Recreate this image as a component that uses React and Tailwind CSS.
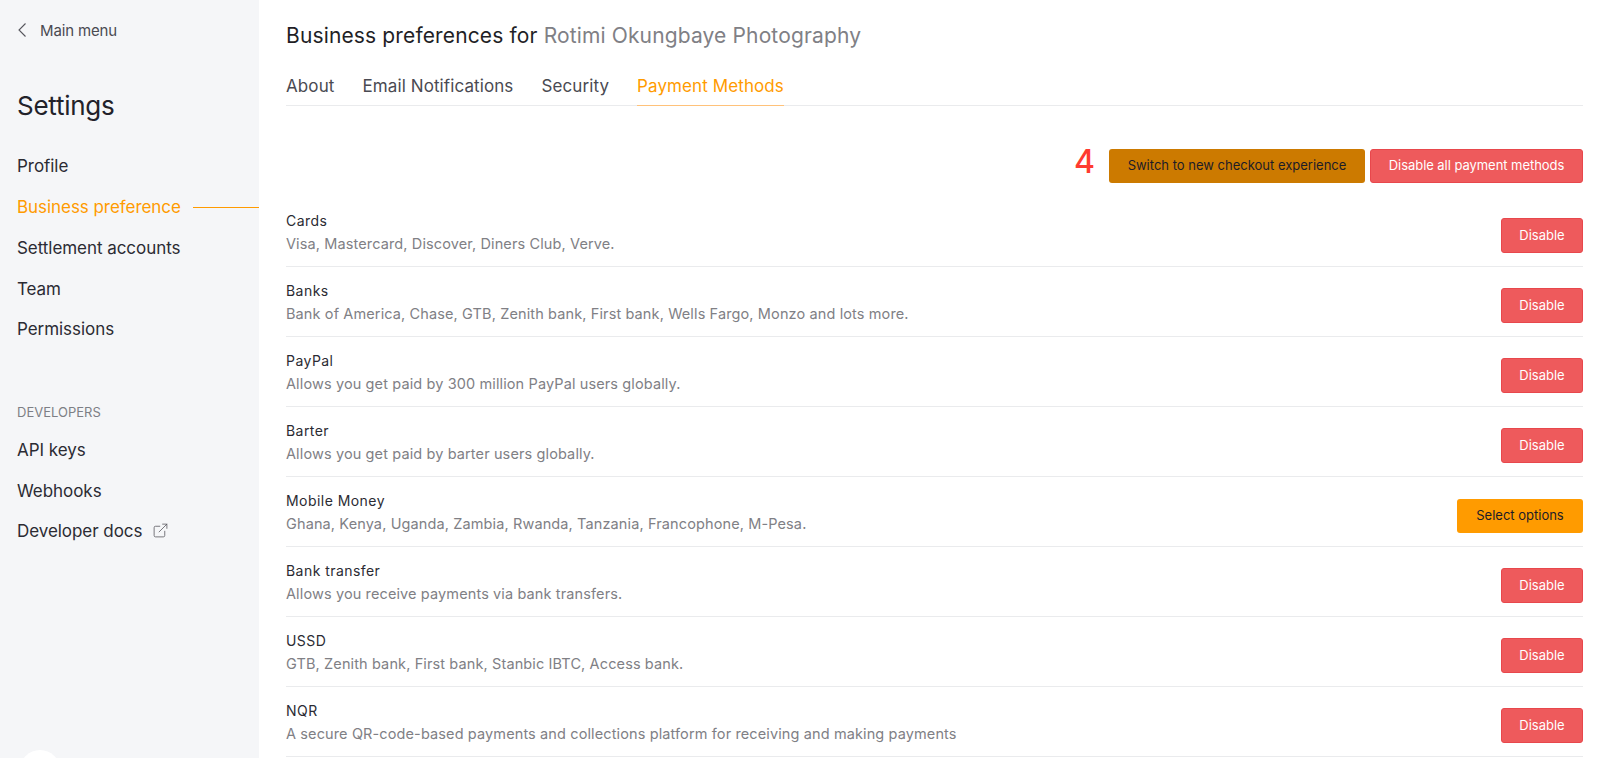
import React from "react";
import { ExternalLink } from "lucide-react";

const methods = [
  { name: "Cards", desc: "Visa, Mastercard, Discover, Diners Club, Verve." },
  { name: "Banks", desc: "Bank of America, Chase, GTB, Zenith bank, First bank, Wells Fargo, Monzo and lots more." },
  { name: "PayPal", desc: "Allows you get paid by 300 million PayPal users globally." },
  { name: "Barter", desc: "Allows you get paid by barter users globally." },
  { name: "Mobile Money", desc: "Ghana, Kenya, Uganda, Zambia, Rwanda, Tanzania, Francophone, M-Pesa.", select: true },
  { name: "Bank transfer", desc: "Allows you receive payments via bank transfers." },
  { name: "USSD", desc: "GTB, Zenith bank, First bank, Stanbic IBTC, Access bank." },
  { name: "NQR", desc: "A secure QR-code-based payments and collections platform for receiving and making payments" },
];

function NavItem({ children, active, height = "h-[41px]" }) {
  return (
    <div className={`flex items-center ${height} text-[17px] tracking-[-0.05px] ${active ? "text-[#ff9b00]" : "text-[#2b2b33]"}`}>
      <span>{children}</span>
      {active && <div className="ml-3 flex-1 h-px bg-[#ff9b00]" />}
    </div>
  );
}

export default function App() {
  return (
    <div className="flex h-[758px] overflow-hidden bg-white font-['Inter',sans-serif]">
      <aside className="relative w-[259px] shrink-0 bg-[#f5f6f8] pl-[17px]">
        <div className="flex items-center h-6 mt-[19px] text-[15px] tracking-[-0.15px] text-[#4a4a52]">
          <svg width="8" height="14" viewBox="0 0 8 14" fill="none" stroke="#55555c" strokeWidth="1.1" className="ml-px mr-[14px] mb-[2px]">
            <path d="M7.5 0.5 L1 7 L7.5 13.5" />
          </svg>
          Main menu
        </div>
        <h2 className="mt-[45px] text-[26px] leading-9 tracking-[-0.26px] text-[#22222a]">Settings</h2>
        <nav className="mt-[22px]">
          <NavItem>Profile</NavItem>
          <NavItem active>Business preference</NavItem>
          <NavItem>Settlement accounts</NavItem>
          <NavItem>Team</NavItem>
          <NavItem height="h-[39px]">Permissions</NavItem>
        </nav>
        <div className="mt-[53px] mb-[8px] text-[13px] leading-5 text-[#7d7f85]">DEVELOPERS</div>
        <NavItem>API keys</NavItem>
        <NavItem>Webhooks</NavItem>
        <div className="flex items-center h-[40px] text-[17px] tracking-[-0.05px] text-[#2b2b33]">
          Developer docs
          <ExternalLink size={17} strokeWidth={1.1} className="ml-[10px] mb-[3px] text-[#55555c]" />
        </div>
        <div className="absolute left-[20px] top-[750px] w-10 h-10 rounded-full bg-white" />
      </aside>

      <main className="flex-1 pl-[27px] pr-[17px]">
        <h1 className="mt-[22px] text-[21px] leading-7 tracking-[0.14px] text-[#1f1f26]">
          Business preferences for <span className="text-[#808085]">Rotimi Okungbaye Photography</span>
        </h1>
        <div className="mt-[22px] flex gap-[28px] border-b border-[#eaebed] text-[17px] tracking-[0.1px] text-[#4a4a52]">
          <div className="h-[33px] leading-[28px]">About</div>
          <div className="h-[33px] leading-[28px]">Email Notifications</div>
          <div className="h-[33px] leading-[28px]">Security</div>
          <div className="h-[33px] leading-[28px] text-[#ff9b00] border-b border-[#ffc27a] -mb-px box-content">Payment Methods</div>
        </div>

        <div className="mt-[40px] flex items-center justify-end">
          <span className="mr-[14px] mb-[8px] text-[32px] leading-none font-medium text-[#ff3b30]">4</span>
          <button className="w-[256px] h-[34px] rounded-[3px] bg-[#cc7a00] text-[13px] text-[#1c1c28]">
            Switch to new checkout experience
          </button>
          <button className="ml-[5px] w-[213px] h-[34px] rounded-[3px] bg-[#ee5a5c] border border-[#e8474c] text-[13px] tracking-[-0.05px] text-white">
            Disable all payment methods
          </button>
        </div>

        <div className="mt-[11px]">
          {methods.map((m) => (
            <div key={m.name} className="flex items-center justify-between h-[70px] border-b border-[#eaebed]">
              <div>
                <div className="text-[14px] leading-[23px] tracking-[0.45px] text-[#2b2b33]">{m.name}</div>
                <div className="text-[14.5px] leading-[23px] tracking-[0.12px] text-[#808085]">{m.desc}</div>
              </div>
              {m.select ? (
                <button className="mt-[8px] w-[126px] h-[34px] rounded-[3px] bg-[#ff9b00] text-[13px] text-[#1c1c28]">Select options</button>
              ) : (
                <button className="mt-[8px] w-[82px] h-[35px] rounded-[3px] bg-[#ee5a5c] border border-[#e8474c] text-[13px] text-white">Disable</button>
              )}
            </div>
          ))}
        </div>
      </main>
    </div>
  );
}
